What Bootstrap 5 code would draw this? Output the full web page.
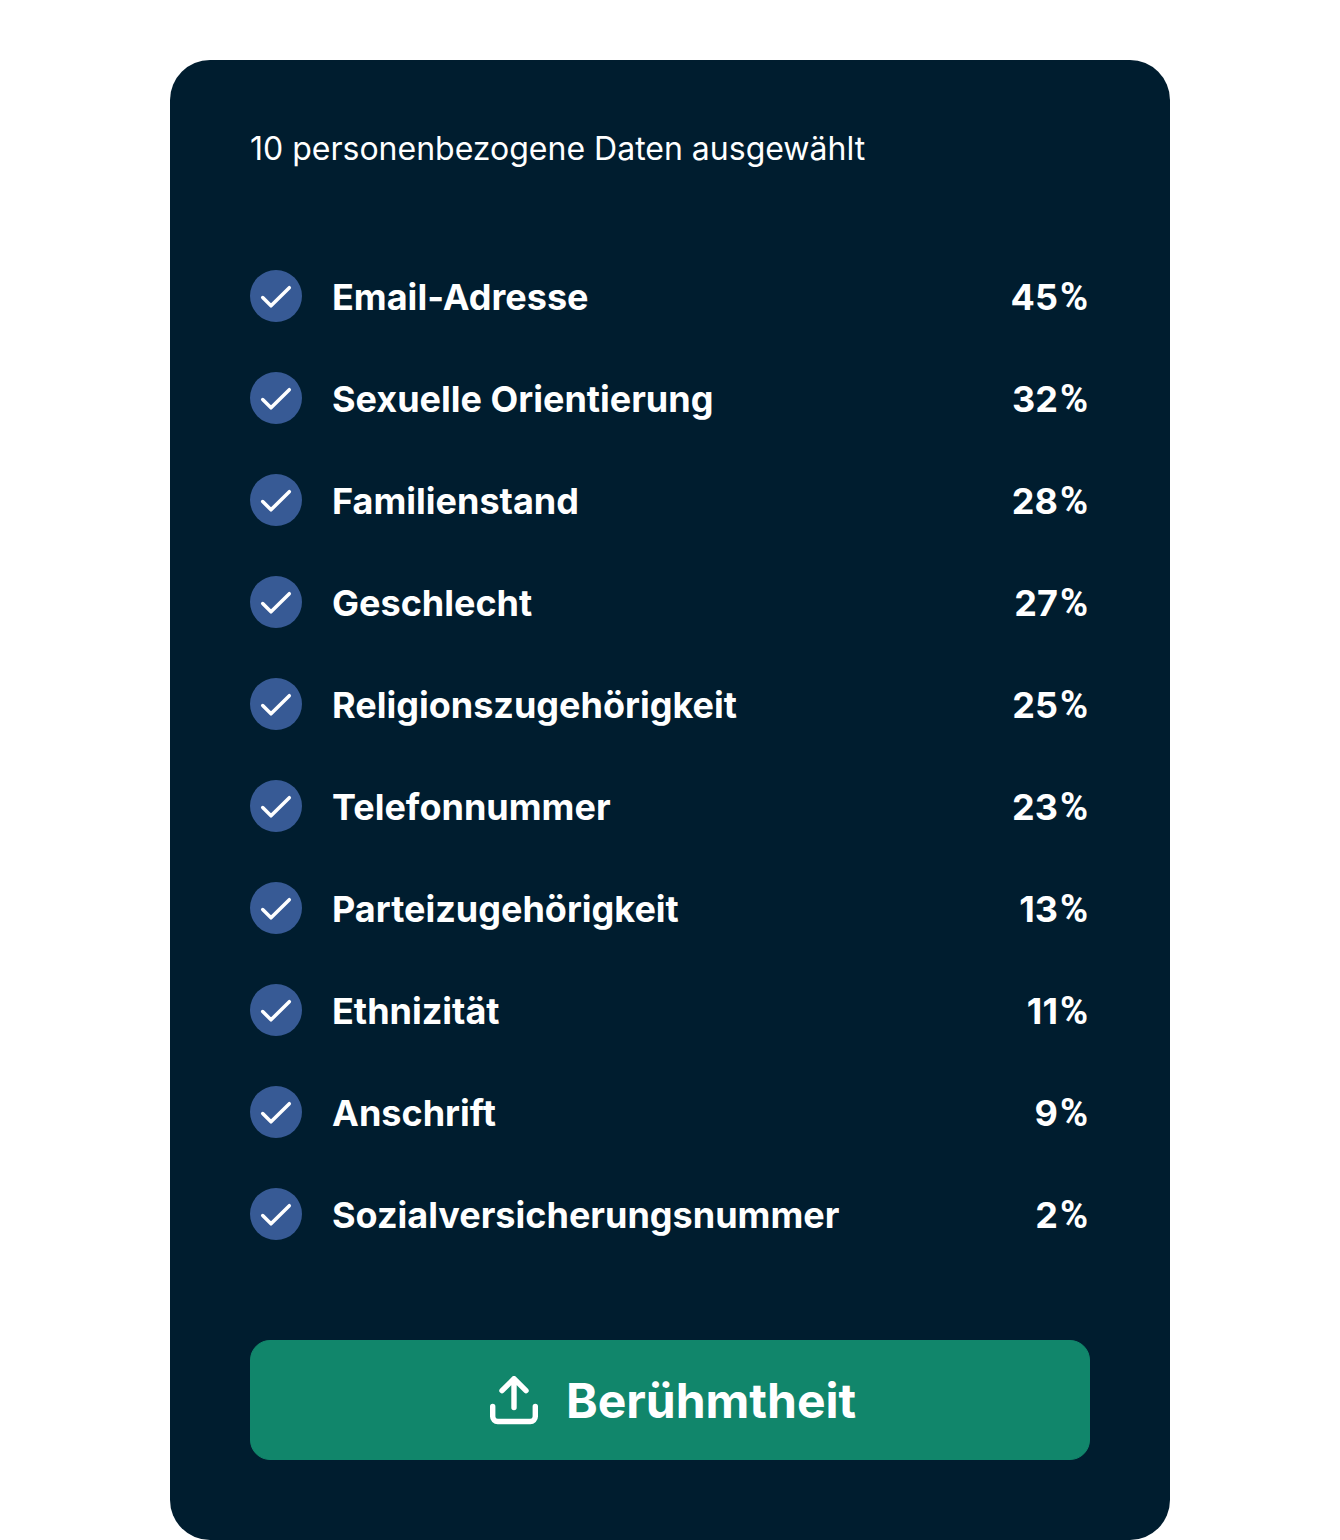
<!DOCTYPE html>
<html lang="de">
<head>
<meta charset="utf-8">
<meta name="viewport" content="width=device-width, initial-scale=1">
<title>Personenbezogene Daten</title>
<link href="https://cdn.jsdelivr.net/npm/bootstrap@5.3.0/dist/css/bootstrap.min.css" rel="stylesheet">
<style>
body { font-family: Inter, "Liberation Sans", sans-serif; background: #fff; }
.page-wrap { padding-top: 60px; }
.data-panel { max-width: 1000px; padding: 68px 80px 80px; border-radius: 40px; background: #001d2f; color: #fff; }
.panel-heading { font-size: 32px; line-height: 42px; font-weight: 400; margin-bottom: 100px; }
.data-list { gap: 50px; margin-bottom: 100px; }
.data-row { gap: 30px; font-size: 36px; line-height: 52px; font-weight: 700; }
.data-row .form-check-input { width: 52px; height: 52px; border: 0; border-radius: 50%; background-color: #20364a; }
.data-row .form-check-input:checked {
  background-color: #375a95; background-size: 52px 52px;
  background-image: url("data:image/svg+xml,%3Csvg xmlns='http://www.w3.org/2000/svg' viewBox='0 0 52 52'%3E%3Cpath d='M12.700 27.500 21 35.800 39.300 17.700' fill='none' stroke='%23fff' stroke-width='3.500' stroke-linecap='round' stroke-linejoin='round'/%3E%3C/svg%3E");
}
.row-text { padding-top: 1px; height: 52px; }
.pct { font-family: Roboto, sans-serif; font-size: 38px; padding: 0 2px; }
.share-btn { height: 120px; gap: 28px; padding: 8px 12px 6px 18px; border-radius: 20px; font-size: 48px; line-height: 60px; font-weight: 700; --bs-btn-color: #fff; --bs-btn-bg: #11866b; --bs-btn-border-color: #11866b; --bs-btn-hover-color: #fff; --bs-btn-hover-bg: #0f745d; --bs-btn-hover-border-color: #0f745d; }
</style>
</head>
<body>
<main class="page-wrap">
<section class="data-panel mx-auto">
<h1 class="panel-heading">10 personenbezogene Daten ausgewählt</h1>
<ul class="data-list list-unstyled d-flex flex-column">
<li class="data-row d-flex"><input class="form-check-input m-0 flex-shrink-0" type="checkbox" id="d1" checked><label class="row-text flex-grow-1" for="d1">Email-Adresse</label><span class="row-text">45<span class="pct">%</span></span></li>
<li class="data-row d-flex"><input class="form-check-input m-0 flex-shrink-0" type="checkbox" id="d2" checked><label class="row-text flex-grow-1" for="d2">Sexuelle Orientierung</label><span class="row-text">32<span class="pct">%</span></span></li>
<li class="data-row d-flex"><input class="form-check-input m-0 flex-shrink-0" type="checkbox" id="d3" checked><label class="row-text flex-grow-1" for="d3">Familienstand</label><span class="row-text">28<span class="pct">%</span></span></li>
<li class="data-row d-flex"><input class="form-check-input m-0 flex-shrink-0" type="checkbox" id="d4" checked><label class="row-text flex-grow-1" for="d4">Geschlecht</label><span class="row-text">27<span class="pct">%</span></span></li>
<li class="data-row d-flex"><input class="form-check-input m-0 flex-shrink-0" type="checkbox" id="d5" checked><label class="row-text flex-grow-1" for="d5">Religionszugehörigkeit</label><span class="row-text">25<span class="pct">%</span></span></li>
<li class="data-row d-flex"><input class="form-check-input m-0 flex-shrink-0" type="checkbox" id="d6" checked><label class="row-text flex-grow-1" for="d6">Telefonnummer</label><span class="row-text">23<span class="pct">%</span></span></li>
<li class="data-row d-flex"><input class="form-check-input m-0 flex-shrink-0" type="checkbox" id="d7" checked><label class="row-text flex-grow-1" for="d7">Parteizugehörigkeit</label><span class="row-text">13<span class="pct">%</span></span></li>
<li class="data-row d-flex"><input class="form-check-input m-0 flex-shrink-0" type="checkbox" id="d8" checked><label class="row-text flex-grow-1" for="d8">Ethnizität</label><span class="row-text">11<span class="pct">%</span></span></li>
<li class="data-row d-flex"><input class="form-check-input m-0 flex-shrink-0" type="checkbox" id="d9" checked><label class="row-text flex-grow-1" for="d9">Anschrift</label><span class="row-text">9<span class="pct">%</span></span></li>
<li class="data-row d-flex"><input class="form-check-input m-0 flex-shrink-0" type="checkbox" id="d10" checked><label class="row-text flex-grow-1" for="d10">Sozialversicherungsnummer</label><span class="row-text">2<span class="pct">%</span></span></li>
</ul>
<button type="button" class="share-btn btn w-100 d-flex align-items-center justify-content-center">
<svg width="48" height="50" viewBox="0 1 48 50" fill="none" stroke="#fff" stroke-width="5.400" stroke-linecap="round" stroke-linejoin="round" aria-hidden="true"><path d="M24 32.500V4M12 15.700 24 3.700 36 15.700M2.700 31.500v10a5 5 0 0 0 5 5h32.600a5 5 0 0 0 5-5V31.500"/></svg>
<span>Berühmtheit</span>
</button>
</section>
</main>
<script src="https://cdn.jsdelivr.net/npm/bootstrap@5.3.0/dist/js/bootstrap.bundle.min.js"></script>
</body>
</html>
